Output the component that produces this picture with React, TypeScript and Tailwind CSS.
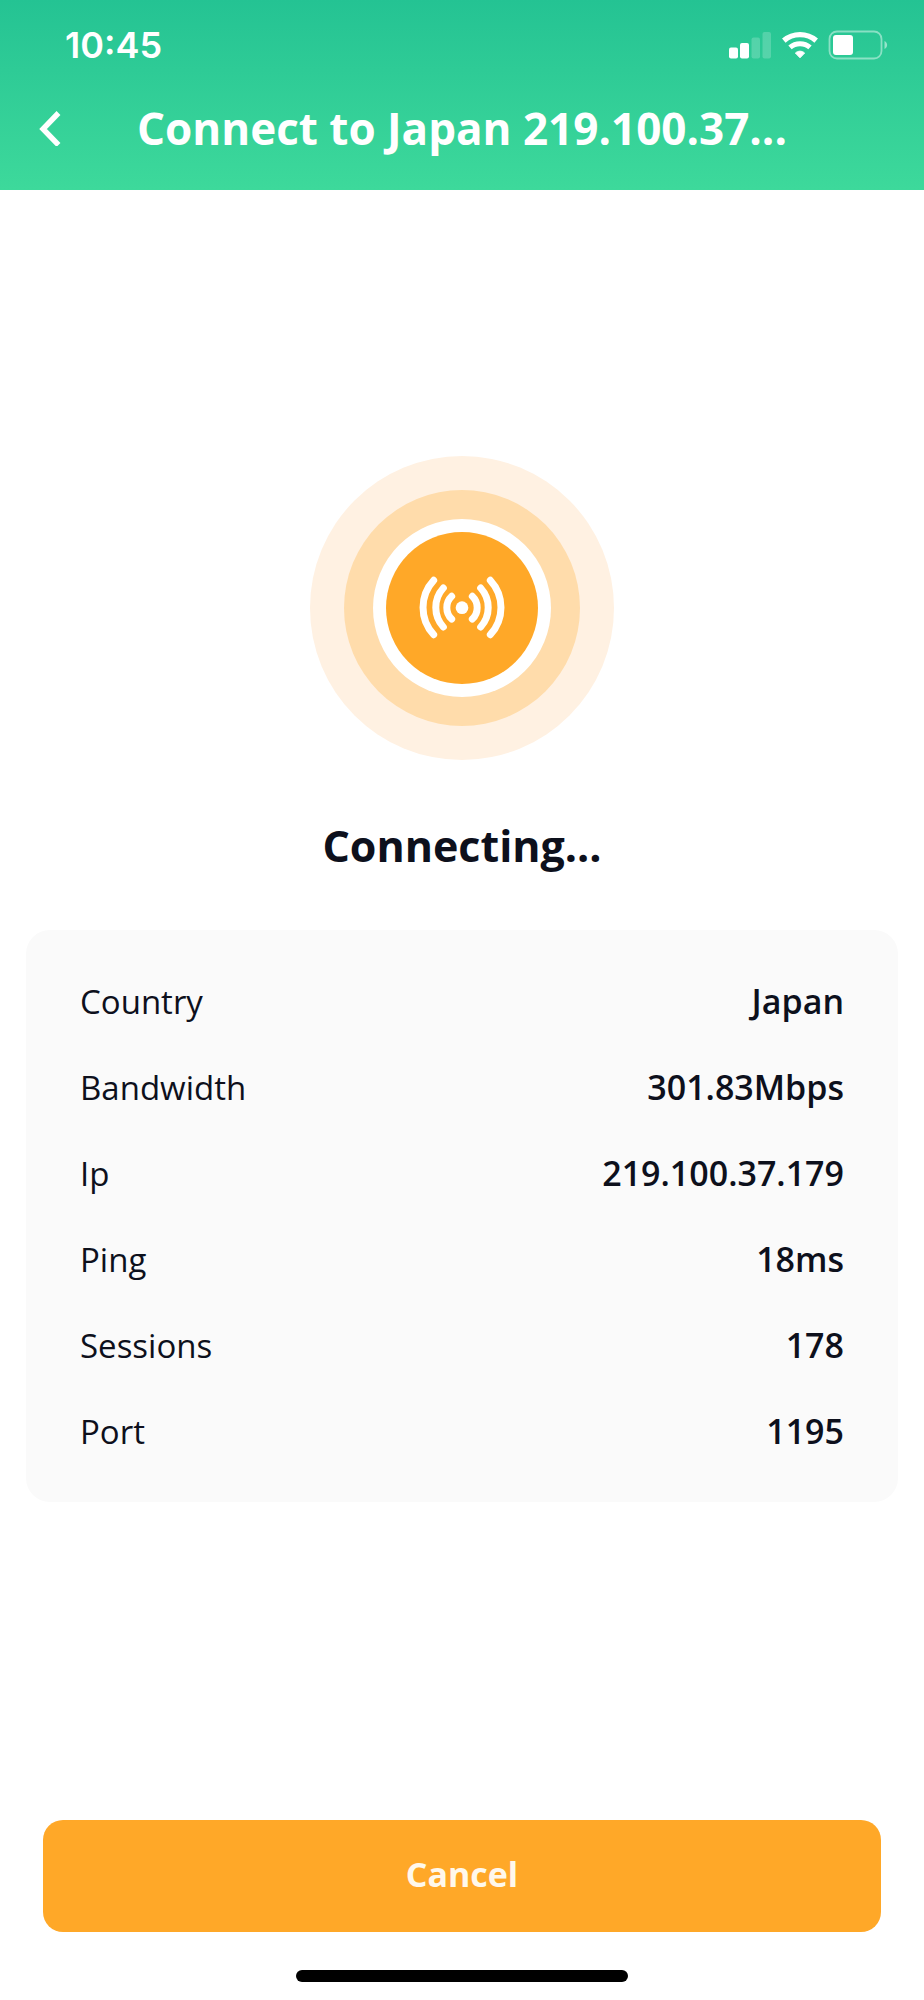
import React from "react";

const details = [
  { label: "Country", value: "Japan" },
  { label: "Bandwidth", value: "301.83Mbps" },
  { label: "Ip", value: "219.100.37.179" },
  { label: "Ping", value: "18ms" },
  { label: "Sessions", value: "178" },
  { label: "Port", value: "1195" },
];

function SignalIcon() {
  return (
    <svg width="44" height="28" viewBox="0 0 44 28" fill="white" aria-hidden="true">
      <rect x="1" y="16.5" width="9" height="11" rx="2" />
      <rect x="12" y="12" width="9" height="15.5" rx="2" />
      <rect x="23.5" y="6.5" width="8.5" height="21" rx="2" opacity="0.2" />
      <rect x="34.5" y="1" width="8.5" height="26.5" rx="2" opacity="0.2" />
    </svg>
  );
}

function WifiIcon() {
  return (
    <svg width="36" height="28" viewBox="0 0 36 28" fill="none" aria-hidden="true">
      <path d="M1.8 9.6 C11 1.6 25 1.6 34.2 9.6" stroke="white" strokeWidth="5.4" />
      <path d="M8 16.4 C13.6 11.4 22.4 11.4 28 16.4" stroke="white" strokeWidth="5" />
      <path d="M13.4 22 C16 19.6 20 19.6 22.6 22 L18 26.8 Z" fill="white" stroke="white" strokeLinejoin="round" />
    </svg>
  );
}

function BatteryIcon() {
  return (
    <svg width="60" height="30" viewBox="0 0 60 30" fill="none" aria-hidden="true">
      <rect x="1.5" y="1.5" width="52" height="27" rx="7.5" stroke="white" strokeOpacity="0.45" strokeWidth="1.8" />
      <rect x="5" y="5" width="20" height="20" rx="3" fill="white" />
      <path d="M56.5 11 C60 12.5 60 17.5 56.5 19 Z" fill="white" fillOpacity="0.5" />
    </svg>
  );
}

function BroadcastIcon() {
  return (
    <svg width="102" height="94" viewBox="0 0 306 282" fill="none" stroke="white" strokeWidth="21" strokeLinecap="round" aria-hidden="true">
      <path d="M68 58 A120 120 0 0 0 68 221" />
      <path d="M97 81 A87 87 0 0 0 97 198" />
      <path d="M122 106 A47 47 0 0 0 122 174" />
      <path d="M238 58 A120 120 0 0 1 238 221" />
      <path d="M209 81 A87 87 0 0 1 209 198" />
      <path d="M184 106 A47 47 0 0 1 184 174" />
      <circle cx="153" cy="140" r="19" fill="white" stroke="none" />
    </svg>
  );
}

export default function App() {
  return (
    <div className="flex min-h-screen flex-col bg-white font-['Open_Sans',sans-serif] text-[#0d101c]">
      <header className="bg-linear-to-b from-[#24c393] to-[#3dd99b] pb-6 text-white">
        <div className="flex h-[90px] items-center justify-between pr-9 pl-[65px]">
          <span className="font-[Inter,sans-serif] text-[36px] leading-none font-semibold">10:45</span>
          <div className="flex items-center gap-2.5">
            <SignalIcon />
            <WifiIcon />
            <BatteryIcon />
          </div>
        </div>
        <div className="flex h-[76px] items-center px-[22px]">
          <button type="button" aria-label="Back" className="flex size-14 shrink-0 items-center justify-center">
            <svg width="24" height="36" viewBox="0 0 24 36" fill="none" aria-hidden="true">
              <path d="M20.5 3 L5 19 L20.5 35" stroke="white" strokeWidth="5.4" />
            </svg>
          </button>
          <h1 className="min-w-0 flex-1 truncate text-center text-[44px] leading-[60px] font-bold">
            Connect to Japan 219.100.37...
          </h1>
          <div className="w-14 shrink-0" />
        </div>
      </header>

      <main className="flex flex-1 flex-col items-center px-[26px] pt-[266px]">
        <div className="flex size-[304px] items-center justify-center rounded-full bg-[#fff1e2]">
          <div className="flex size-[236px] items-center justify-center rounded-full bg-[#ffdcab]">
            <div className="flex size-[178px] items-center justify-center rounded-full bg-white">
              <div className="flex size-[152px] items-center justify-center rounded-full bg-[#ffa828]">
                <BroadcastIcon />
              </div>
            </div>
          </div>
        </div>

        <h2 className="mt-14 text-[43px] leading-[60px] font-bold">Connecting...</h2>

        <dl className="mt-[54px] w-full rounded-3xl bg-[#fafafa] px-[54px] py-7">
          {details.map((item) => (
            <div key={item.label} className="flex h-[86px] items-center justify-between text-[33px] leading-none">
              <dt className="font-medium">{item.label}</dt>
              <dd className="text-[34px] font-semibold">{item.value}</dd>
            </div>
          ))}
        </dl>
      </main>

      <footer className="flex flex-col items-center px-[43px] pt-10 pb-[18px]">
        <button
          type="button"
          className="h-28 w-full rounded-[20px] bg-[#ffa828] pb-1 text-[34px] font-bold text-[#fff8ec]"
        >
          Cancel
        </button>
        <div className="mt-[38px] h-3 w-[332px] rounded-full bg-black" />
      </footer>
    </div>
  );
}
